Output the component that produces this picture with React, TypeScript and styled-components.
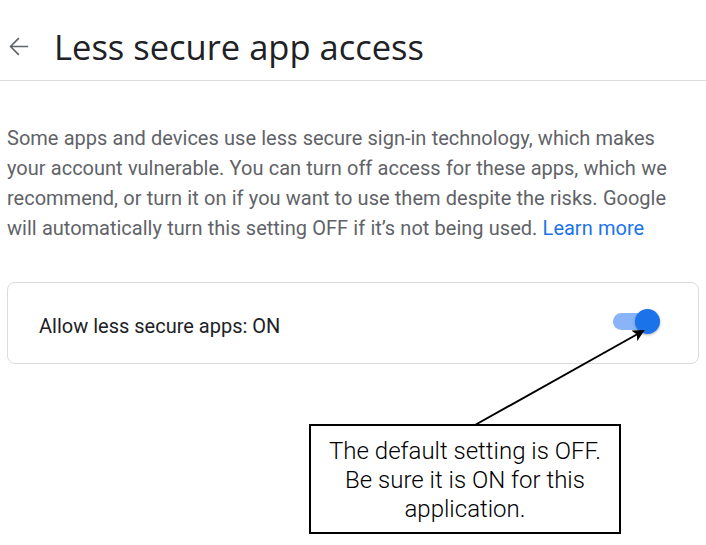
import styled, {createGlobalStyle} from 'styled-components';

const GlobalStyle = createGlobalStyle`
  html, body {
    margin: 0;
    padding: 0;
    background: #fff;
  }
  body {
    font-family: Roboto, "Liberation Sans", Arial, sans-serif;
  }
`;

const Page = styled.div`
  position: relative;
  width: 706px;
  height: 545px;
  overflow: hidden;
`;

const Header = styled.header`
  display: flex;
  align-items: center;
  height: 81px;
  padding-top: 12px;
  box-sizing: border-box;
  border-bottom: 1px solid #dadce0;
`;

const BackButton = styled.button`
  display: flex;
  align-items: center;
  justify-content: center;
  width: 36px;
  height: 36px;
  padding: 0;
  border: none;
  background: none;
  color: #5f6368;
  cursor: pointer;
`;

const Title = styled.h1`
  margin: 0 0 0 18px;
  font-family: "Open Sans", Roboto, sans-serif;
  font-size: 34.5px;
  font-weight: 400;
  color: #202124;
`;

const Content = styled.main`
  padding: 42px 7px 0;
`;

const Description = styled.p`
  max-width: 672px;
  margin: 0;
  font-size: 20px;
  line-height: 30px;
  word-spacing: 0.3px;
  color: #5f6368;
`;

const Link = styled.a`
  color: #1a73e8;
  text-decoration: none;
`;

const Card = styled.section`
  display: flex;
  align-items: center;
  justify-content: space-between;
  height: 82px;
  margin-top: 39px;
  padding: 0 43px 0 31px;
  box-sizing: border-box;
  border: 1px solid #dadce0;
  border-radius: 8px;
`;

const CardLabel = styled.span`
  font-size: 20px;
  color: #202124;
  margin-top: 6px;
`;

const Track = styled.div<{$on: boolean}>`
  position: relative;
  width: 42px;
  height: 17px;
  border-radius: 9px;
  background: ${p => (p.$on ? '#8ab4f8' : '#bdc1c6')};
  margin-top: -3px;
`;

const Thumb = styled.div<{$on: boolean}>`
  position: absolute;
  top: -4px;
  left: ${p => (p.$on ? '22px' : '-4px')};
  width: 25px;
  height: 25px;
  border-radius: 50%;
  background: ${p => (p.$on ? '#1a73e8' : '#fff')};
  box-shadow: 0 1px 3px rgba(0, 0, 0, 0.3);
`;

const Callout = styled.div`
  position: absolute;
  left: 309px;
  top: 424px;
  width: 312px;
  height: 110px;
  box-sizing: border-box;
  border: 2px solid #000;
  background: #fff;
  display: flex;
  align-items: center;
  justify-content: center;
  text-align: center;
  font-size: 24px;
  font-weight: 300;
  line-height: 29px;
  color: #000;
  padding: 2px 12px 0;
`;

const Pointer = styled.svg`
  position: absolute;
  left: 0;
  top: 0;
  pointer-events: none;
`;

const Toggle = ({on}: {on: boolean}) => (
  <Track $on={on}>
    <Thumb $on={on} />
  </Track>
);

export default function App() {
  return (
    <>
      <GlobalStyle />
      <Page>
        <Header>
          <BackButton aria-label="Back">
            <svg width="29" height="29" viewBox="0 0 24 24" fill="currentColor">
              <path d="M20 11.4H6.9l5.9-5.9-1-1L4.5 12l7.3 7.5 1-1-5.9-5.9H20v-1.2z" />
            </svg>
          </BackButton>
          <Title>Less secure app access</Title>
        </Header>
        <Content>
          <Description>
            Some apps and devices use less secure sign-in technology, which makes
            your account vulnerable. You can turn off access for these apps, which we
            recommend, or turn it on if you want to use them despite the risks. Google
            will automatically turn this setting OFF if it’s not being used.{' '}
            <Link href="#">Learn more</Link>
          </Description>
          <Card>
            <CardLabel>Allow less secure apps: ON</CardLabel>
            <Toggle on />
          </Card>
        </Content>
        <Pointer width="706" height="545">
          <defs>
            <marker
              id="head"
              markerWidth="12"
              markerHeight="12"
              refX="10"
              refY="6"
              orient="auto"
              markerUnits="userSpaceOnUse"
            >
              <path d="M0 0 L12 6 L0 12 L3 6 Z" fill="#000" />
            </marker>
          </defs>
          <line
            x1="475"
            y1="425"
            x2="643"
            y2="331"
            stroke="#000"
            strokeWidth="2"
            markerEnd="url(#head)"
          />
        </Pointer>
        <Callout>
          The default setting is OFF.
          <br />
          Be sure it is ON for this application.
        </Callout>
      </Page>
    </>
  );
}
